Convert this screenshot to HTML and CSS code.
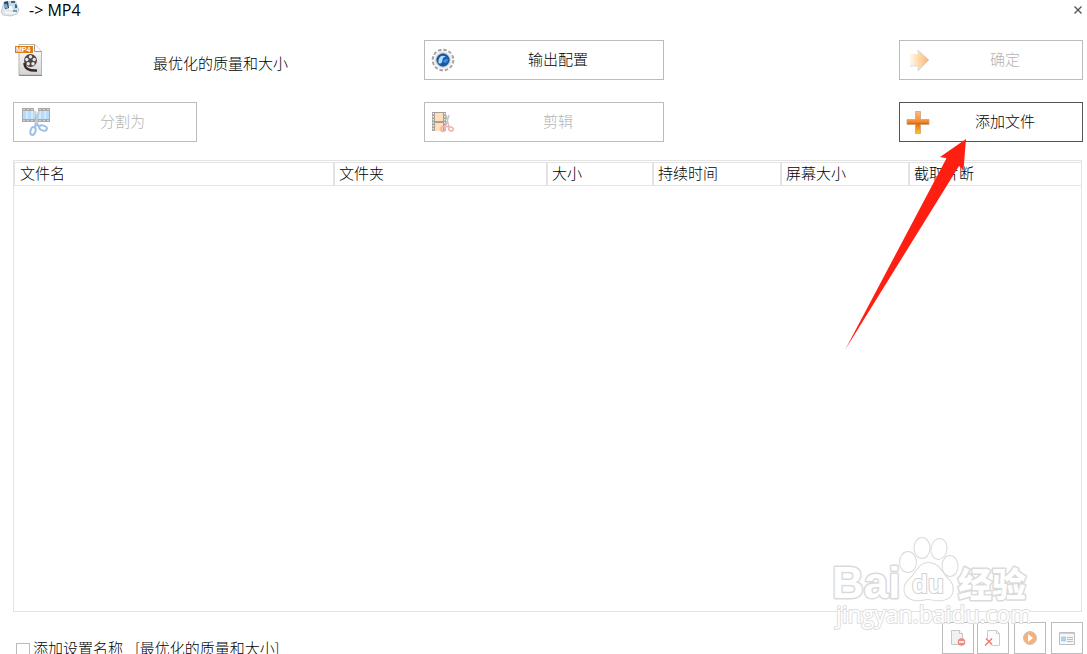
FILE: index.html
```html
<!DOCTYPE html>
<html lang="zh-CN">
<head>
<meta charset="utf-8">
<title>-> MP4</title>
<link rel="stylesheet" href="styles.css">
</head>
<body>
<div class="window">
  <header class="titlebar">
    <svg class="app-icon" viewBox="0 0 20 18" aria-hidden="true">
      <path d="M2 10 4 3 15 2 19 11 17 15 11 17 3 16 1 13Z" fill="#dfe5e9" stroke="#b5bcc2" stroke-width=".7"/>
      <path d="M4 3 8 2 9 9 5 10Z" fill="#27476a"/>
      <path d="M5 5h2l1 4H4Z" fill="#6dade0"/>
      <path d="M9 2h7l2 7-5 3-4-2Z" fill="#c5dbe8"/>
      <path d="M11 2h4v2h-4ZM15 5l2 1v3h-2Z" fill="#426580"/>
      <path d="M9 7h3l1 4h-4Z" fill="#f8fbfd"/>
      <path d="M4 12l9 1 4-2-2 4H5Z" fill="#f2f4f5"/>
      <path d="M13 11h4v2h-4Z" fill="#6d9ec4"/>
    </svg>
    <span class="title">-&gt; MP4</span>
    <button class="close" type="button" aria-label="关闭">
      <svg viewBox="0 0 8 8" aria-hidden="true"><path d="M.5.5l7 7M7.500.5l-7 7" stroke="#555" stroke-width="1.400"/></svg>
    </button>
  </header>

  <section class="toolbar">
    <div class="profile">
      <svg class="profile-icon" viewBox="0 0 30 34" aria-hidden="true">
        <defs><linearGradient id="page" x2="0" y2="1"><stop stop-color="#fff"/><stop offset="1" stop-color="#d4d4d4"/></linearGradient></defs>
        <path d="M4 1.500h16l6.500 7V32H4Z" fill="url(#page)" stroke="#b5b5b5"/>
        <path d="M4 32.500h23" stroke="#888"/>
        <path d="M19.500 1.500v7h7" fill="#fff" stroke="#999"/>
        <circle cx="15.500" cy="17.500" r="6.500" fill="#4a4745"/>
        <g fill="#e8e5e2"><circle cx="15.500" cy="13.700" r="1.700"/><circle cx="11.800" cy="16.500" r="1.700"/><circle cx="19.200" cy="16.500" r="1.700"/><circle cx="13.200" cy="20.800" r="1.700"/><circle cx="18" cy="20.800" r="1.700"/></g>
        <path d="M9.500 20c0 6 5 8 12.500 7.500" fill="none" stroke="#3a2825" stroke-width="2.500"/>
        <path d="M0 3h18v7H0Z" fill="#df7d12"/>
        <text x="1" y="9" class="badge-text">MP4</text>
      </svg>
      <span class="profile-name">最优化的质量和大小</span>
    </div>
    <button class="tool config" type="button">
      <svg class="tool-icon" viewBox="0 0 24 24" aria-hidden="true">
        <circle cx="12" cy="12" r="10.200" fill="none" stroke="#a0a0a0" stroke-width="2.200" stroke-dasharray="3.400 1.941"/>
        <circle cx="12" cy="12" r="9.600" fill="#f0f0f0"/>
        <circle cx="12" cy="12" r="7.200" fill="#fff" stroke="#bbb" stroke-width=".6"/>
        <circle cx="12" cy="12" r="6.200" fill="#155cae" stroke="#0c4387" stroke-width=".8"/>
        <path d="M7.500 15C7 9 11 6 15 9c-4-.5-3 3-4 5-.8 1.500-2 2-3.500 1Z" fill="#b6dcf9"/>
        <path d="M12 14c1-3 3-4 5-3 0 3-2 5-5 3Z" fill="#3e8edb"/>
      </svg>
      <span class="tool-label">输出配置</span>
    </button>
    <button class="tool confirm" type="button" disabled>
      <svg class="tool-icon" viewBox="0 0 24 24" aria-hidden="true">
        <defs><linearGradient id="go"><stop stop-color="#fff8ec"/><stop offset=".6" stop-color="#ffd19a"/><stop offset="1" stop-color="#ffad78"/></linearGradient></defs>
        <path d="M4 6h8V2l11 10-11 11v-5H4Z" fill="url(#go)"/>
        <path d="M12 5.500V2l11 10-11 11v-5H4" fill="none" stroke="#dcdcdc" stroke-width="1"/>
      </svg>
      <span class="tool-label">确定</span>
    </button>
    <button class="tool split" type="button" disabled>
      <svg class="tool-icon wide" viewBox="0 0 30 30" aria-hidden="true">
        <path d="M1 1h28v14H1Z" fill="#a9a9a9"/>
        <path d="M2 4h12v8H2ZM16 4h12v8H16Z" fill="#b7dcfb"/>
        <path d="M6 4v8M11 4v8M19 4v8M24 4v8" stroke="#e9f5ff"/>
        <path d="M2 2.500h27M2 13.500h27" stroke="#d2d2d2" stroke-dasharray="2 2"/>
        <path d="M13 1h4v4l-2 5-2-5Z" fill="#fff"/>
        <path d="M14 4 17 18M18 4 14 18" stroke="#c5c9cd" stroke-width="1.800"/>
        <path d="M17 17 13 20M14 17l5 3" stroke="#9fc0e5" stroke-width="2"/>
        <ellipse cx="12" cy="24" rx="2.500" ry="4" transform="rotate(18 12 24)" fill="none" stroke="#9fc0e5" stroke-width="2"/>
        <ellipse cx="22" cy="21" rx="4" ry="2.500" transform="rotate(20 22 21)" fill="none" stroke="#9fc0e5" stroke-width="2"/>
      </svg>
      <span class="tool-label">分割为</span>
    </button>
    <button class="tool clip" type="button" disabled>
      <svg class="tool-icon" viewBox="0 0 24 24" aria-hidden="true">
        <path d="M1 2h14v19H1Z" fill="#a6a09c"/>
        <path d="M4 3h8v8H4ZM4 13h8v8H4Z" fill="#ffdfb8"/>
        <path d="M2.300 3v18M13.700 3v18" stroke="#eee" stroke-width="1.300" stroke-dasharray="1.500 1.500"/>
        <path d="M15 5l3 12M18 5 14 18" stroke="#c5c5c5" stroke-width="1.500"/>
        <ellipse cx="12" cy="19" rx="2" ry="2.500" fill="none" stroke="#f3b0ac" stroke-width="1.600"/>
        <ellipse cx="20" cy="19" rx="2.300" ry="2" transform="rotate(35 20 19)" fill="none" stroke="#f3b0ac" stroke-width="1.600"/>
        <path d="M13 16l5 1" stroke="#f3b0ac" stroke-width="1.500"/>
      </svg>
      <span class="tool-label">剪辑</span>
    </button>
    <button class="tool add" type="button">
      <svg class="tool-icon" viewBox="0 0 24 24" aria-hidden="true">
        <defs><linearGradient id="plus" x2="0" y2="1"><stop stop-color="#ffb884"/><stop offset=".45" stop-color="#f88b36"/><stop offset=".55" stop-color="#e06c06"/><stop offset="1" stop-color="#ffc62b"/></linearGradient></defs>
        <path d="M9.500 1.500h5v8h8.500v5h-8.500v9h-5v-9H1v-5h8.500Z" fill="url(#plus)" stroke="#c9a27f" stroke-width=".8" stroke-linejoin="round"/>
      </svg>
      <span class="tool-label">添加文件</span>
    </button>
  </section>

  <main class="file-list">
    <table class="files">
      <colgroup><col class="c-name"><col class="c-folder"><col class="c-size"><col class="c-time"><col class="c-screen"><col></colgroup>
      <thead><tr><th>文件名</th><th>文件夹</th><th>大小</th><th>持续时间</th><th>屏幕大小</th><th>截取片断</th></tr></thead>
    </table>
  </main>

  <footer class="footer">
    <label class="naming"><input class="check" type="checkbox"><span>添加设置名称<span class="suffix">[最优化的质量和大小]</span></span></label>
    <div class="actions">
      <button class="mini" type="button" aria-label="移除">
        <svg viewBox="0 0 18 18" aria-hidden="true"><path d="M2.500 1.500h8l3 3v11h-11Z" fill="#f1f1f1" stroke="#c6c6c6"/><path d="M10.500 1.500v3h3" fill="#fff" stroke="#c6c6c6"/><circle cx="12.500" cy="13" r="3.800" fill="#ee8780"/><path d="M10 13h5" stroke="#fff" stroke-width="1.600"/></svg>
      </button>
      <button class="mini" type="button" aria-label="清空列表">
        <svg viewBox="0 0 18 18" aria-hidden="true"><path d="M3.500 10v-8.500h9l3 3v12h-8" fill="#fcfcfc" stroke="#ccc"/><path d="M12.500 1.500v3h3" fill="none" stroke="#ccc"/><path d="M2 9.500l6 6M8 9.500l-7 7" stroke="#f0776e" stroke-width="1.400"/></svg>
      </button>
      <button class="mini spaced" type="button" aria-label="播放">
        <svg viewBox="0 0 18 18" aria-hidden="true"><circle cx="9" cy="9" r="6.500" fill="#f8b076" stroke="#cfc3ba"/><path d="M7 5l5 4-5 4Z" fill="#fff"/></svg>
      </button>
      <button class="mini spaced" type="button" aria-label="属性">
        <svg viewBox="0 0 18 18" aria-hidden="true"><path d="M1.500 3.500h15v12h-15Z" fill="#f7f7f7" stroke="#b9bfc3"/><path d="M2 4.500h14" stroke="#ccd0d3"/><path d="M3.500 8h4v4h-4Z" fill="#a7d8f5" stroke="#8bbcd9" stroke-width=".6"/><path d="M9 8.500h6M9 10.500h6M9 12.500h6" stroke="#bbb"/></svg>
      </button>
    </div>
  </footer>

  <svg class="pointer" viewBox="0 0 122 212" aria-hidden="true"><path d="M121 0 95 18l6.500 1.300L0 211 114 27l4.500 4Z" fill="#ff1e12"/></svg>

  <svg class="watermark" viewBox="0 0 210 100" aria-hidden="true">
    <g class="wm">
      <text class="wm-bai" x="12" y="68">Bai</text>
      <ellipse cx="88" cy="32" rx="8" ry="10"/>
      <ellipse cx="102" cy="18" rx="7.500" ry="10"/>
      <ellipse cx="119" cy="19" rx="7.500" ry="10" transform="rotate(10 119 19)"/>
      <ellipse cx="130" cy="36" rx="7.500" ry="10"/>
      <path d="M108 33c11 0 13 9 20 16 7 6 7 20-6 21-7 1-9-1-14-1s-7 2-13 1c-13-2-13-15-5-21 7-7 9-16 18-16Z"/>
      <text class="wm-du" x="92" y="63">du</text>
      <text class="wm-cn" x="138" y="67">经验</text>
      <text class="wm-url" x="16" y="93">jingyan.baidu.com</text>
    </g>
  </svg>
</div>
</body>
</html>
```

FILE: styles.css
```css
* { box-sizing: border-box; }

body {
  margin: 0;
  background: #fff;
  color: #000;
  font: 15px/20px "Noto Sans CJK SC", sans-serif;
  overflow: hidden;
}

button {
  font: inherit;
  color: inherit;
  background: #fff;
  padding: 0;
}

svg { display: block; }

.window {
  position: relative;
  display: flex;
  flex-direction: column;
  height: 100vh;
}

.titlebar {
  display: flex;
  align-items: center;
  flex: none;
  height: 20px;
  padding-right: 4px;
}

.app-icon { width: 20px; height: 18px; margin-bottom: 4px; }

.title {
  flex: 1;
  margin-left: 9px;
  font-family: "Open Sans", sans-serif;
  font-size: 16px;
}

.close {
  border: 0;
  width: 10px;
  height: 10px;
  display: grid;
  place-items: center;
}

.close svg { width: 8px; height: 8px; }

.toolbar {
  display: grid;
  flex: none;
  grid-template-columns: 411px 1fr 184px;
  grid-auto-rows: 40px;
  row-gap: 22px;
  padding: 20px 4px 18px 13px;
}

.profile { display: flex; align-items: center; }
.profile-icon { width: 30px; height: 34px; margin-left: 2px; }
.profile-name { padding-top: 6px; margin-left: 108px; font-weight: 300; }

.badge-text {
  font: bold 7px "Liberation Sans", sans-serif;
  fill: #fff;
}

.tool {
  display: flex;
  align-items: center;
  width: 184px;
  border: 1px solid #bcbcbc;
  padding: 0 7px 0 6px;
  font-weight: 300;
}

.config, .clip { width: 240px; }
.add { border-color: #555; }
.tool:disabled { color: #b4b4b4; }
.tool-icon { flex: none; width: 24px; height: 24px; }
.tool-icon.wide { width: 30px; height: 30px; margin-left: 1px; }
.tool-label { flex: 1; text-align: center; padding: 0 0 2px 5px; }

.file-list {
  flex: 1;
  min-height: 0;
  margin: 0 5px 0 13px;
  padding-top: 1px;
  border: 1px solid #e3e3e3;
}

.files {
  width: 100%;
  table-layout: fixed;
  border-collapse: separate;
  border-spacing: 0;
}

.files th {
  height: 24px;
  padding: 0 0 2px 4px;
  border: 1px solid #e3e3e3;
  text-align: left;
  font-weight: 300;
  line-height: 20px;
}

.files th:first-child { padding-left: 5px; }
.files th:last-child { border-right: 0; }

.c-name { width: 320px; }
.c-folder { width: 213px; }
.c-size { width: 106px; }
.c-time, .c-screen { width: 128px; }

.footer {
  display: flex;
  flex: none;
  justify-content: space-between;
  height: 42px;
  padding: 10px 4px 0 16px;
}

.naming {
  display: flex;
  align-items: flex-start;
  gap: 3px;
  padding-top: 16px;
  font-weight: 300;
}

.check {
  appearance: none;
  width: 14px;
  height: 14px;
  margin: 5px 0 0;
  border: 1px solid #bcbcbc;
  background: #fff;
}

.suffix { margin-left: 12px; }

.actions { display: flex; gap: 3px; }

.mini {
  display: grid;
  place-items: center;
  width: 32px;
  height: 32px;
  border: 1px solid #bcbcbc;
}

.mini svg { width: 18px; height: 18px; }
.mini.spaced { margin-left: 2px; }

.pointer {
  position: absolute;
  top: 139px;
  right: 120px;
  width: 122px;
  height: 212px;
  pointer-events: none;
}

.watermark {
  position: absolute;
  right: 57px;
  bottom: 24px;
  width: 210px;
  height: 100px;
  pointer-events: none;
}

.wm {
  fill: #fff;
  stroke: #dadada;
  stroke-width: 2px;
  stroke-linejoin: round;
  paint-order: stroke;
}

.wm-bai, .wm-cn { stroke-width: 3px; }
.wm-bai { font: bold 44px "Liberation Sans", sans-serif; }
.wm-du { font: bold 26px "Liberation Sans", sans-serif; stroke: #d0d0d0; }
.wm-cn { font: 900 34px "Noto Sans CJK SC", sans-serif; }

.wm-url {
  font: 23px "Open Sans", sans-serif;
  stroke: #dedede;
}
```
